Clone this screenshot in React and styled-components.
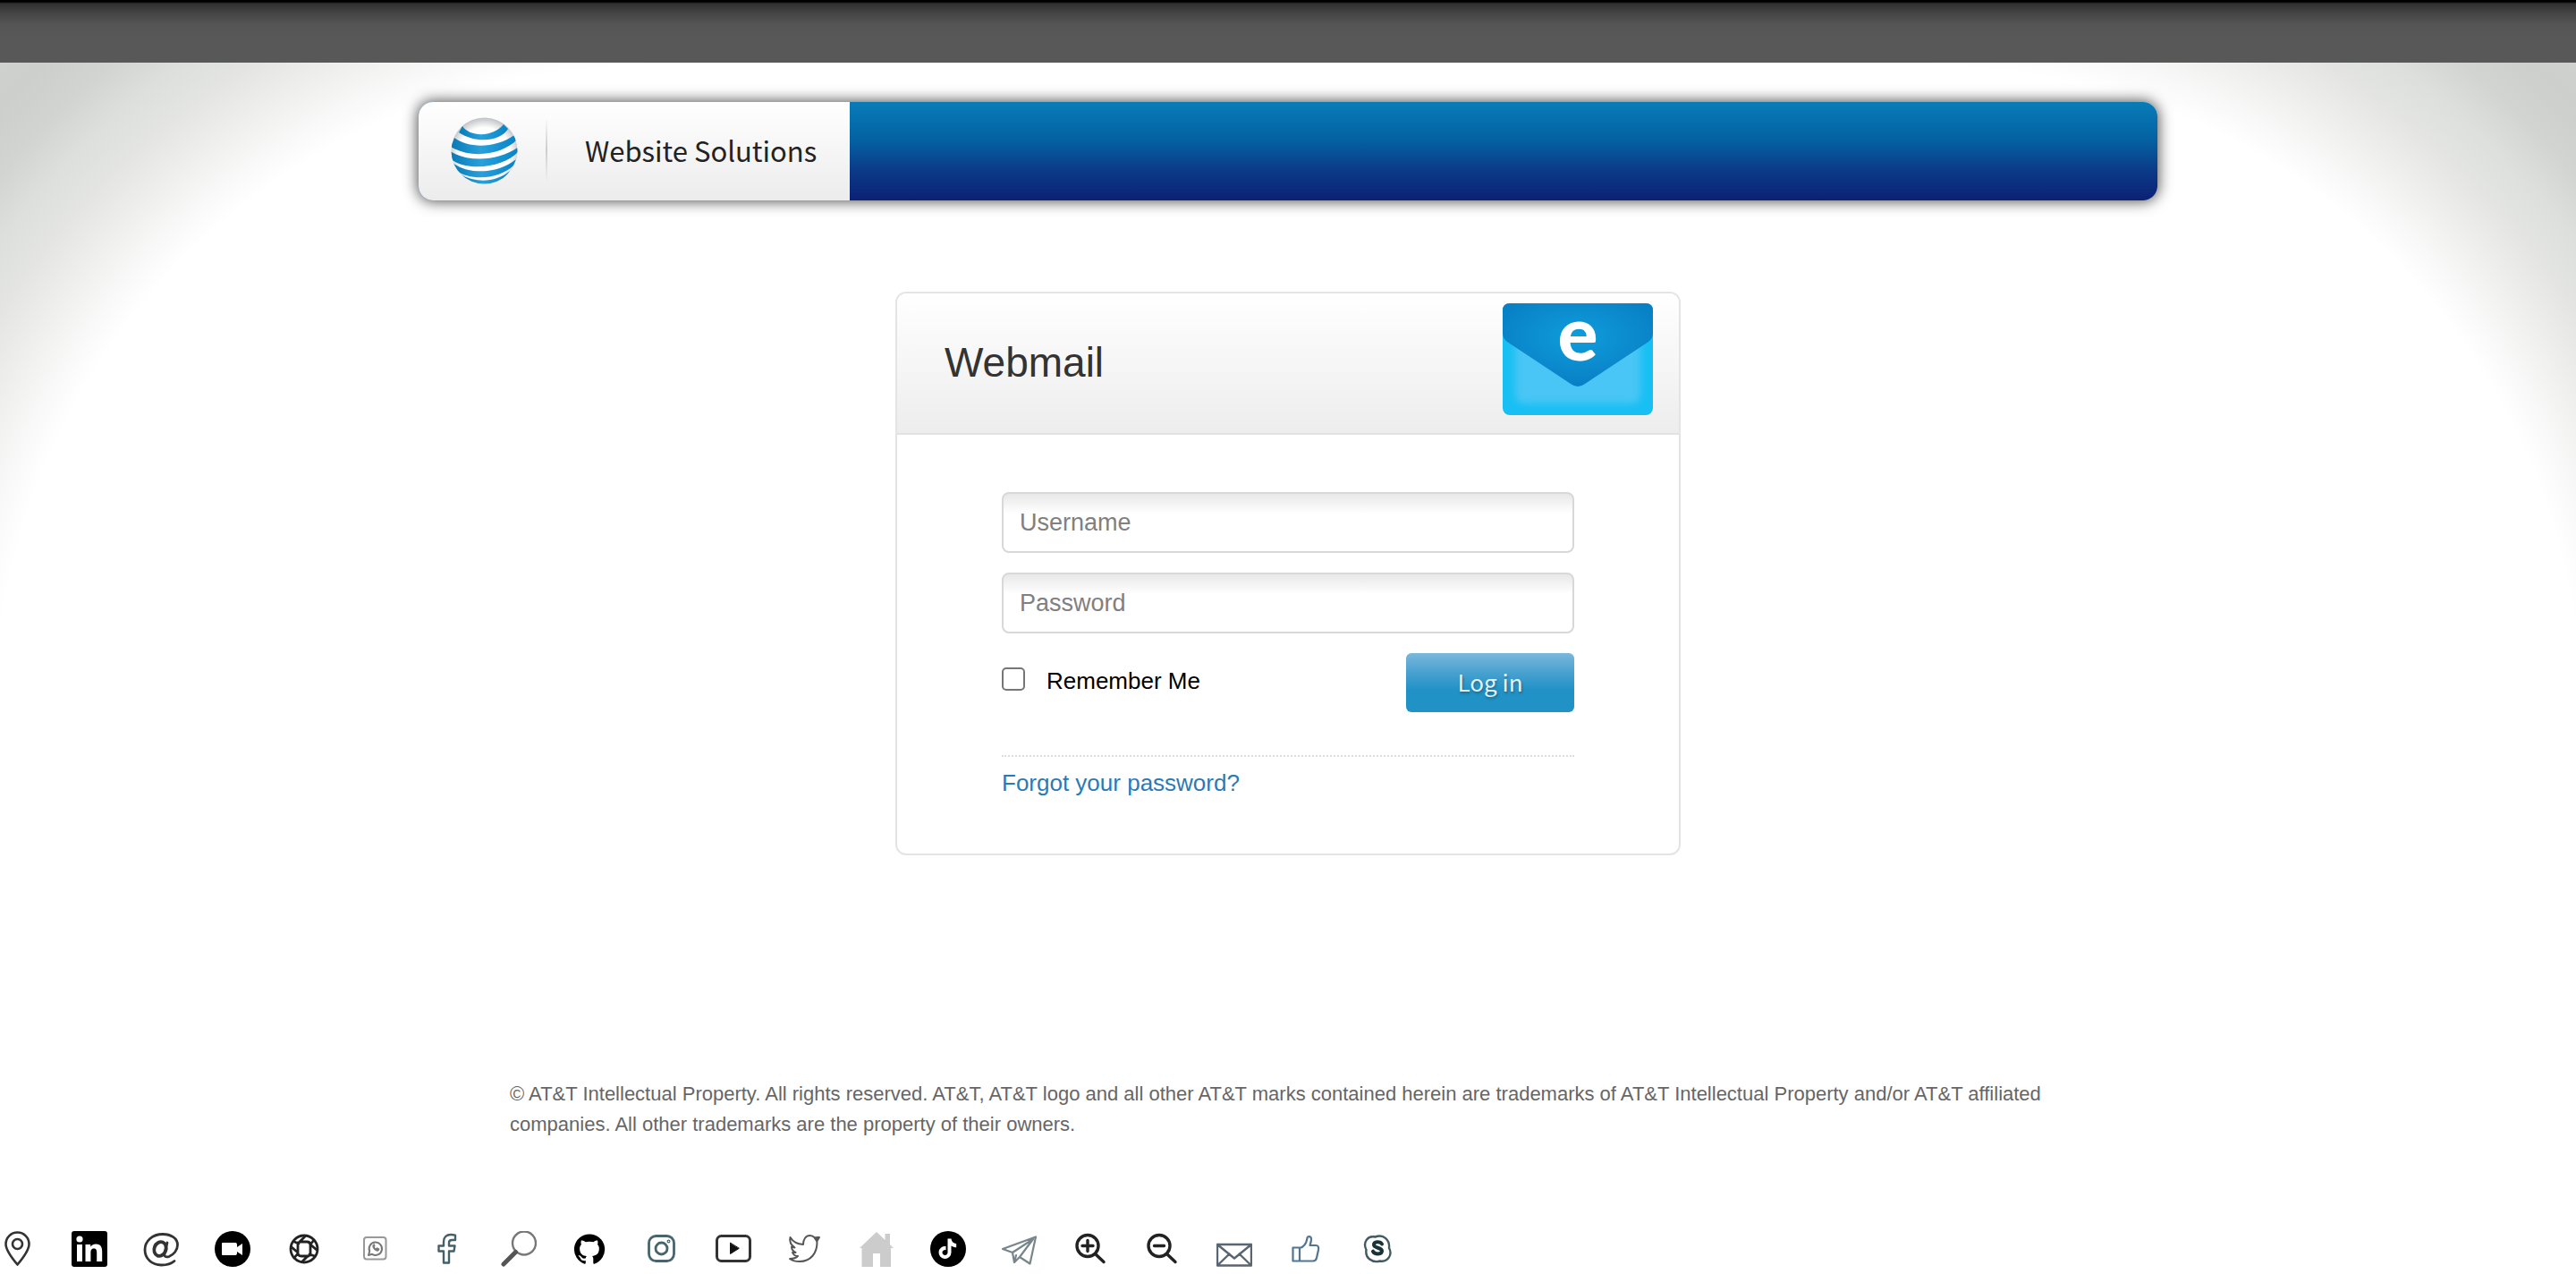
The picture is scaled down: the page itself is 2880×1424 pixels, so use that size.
import React from "react";
import styled, { createGlobalStyle } from "styled-components";

const Global = createGlobalStyle`
  *, *::before, *::after { box-sizing: border-box; }
  body {
    margin: 0;
    background: #fff;
    color: #000;
    font-family: "Liberation Sans", Arial, sans-serif;
    font-size: 26px;
    line-height: 34px;
  }
`;

const fade = "#fff 725px, #f8f8f8 760px, #efefed 800px, #e4e5e3 850px, #dcdfdc 895px, #d1d4d1 940px, #cccfcc 990px, #d0d2cf 1030px";

const Page = styled.div`
  background:
    radial-gradient(circle at 100% 100%, ${fade}) 0 70px / 720px 730px no-repeat,
    radial-gradient(circle at 0 100%, ${fade}) 100% 70px / 720px 730px no-repeat;
`;

const TopBar = styled.div`
  height: 70px;
  background: linear-gradient(#000 2px, #303030 4px, #444 14px, #555 28px, #585858 44px);
`;

const Header = styled.header`
  display: flex;
  width: calc(100% - 80px);
  max-width: 1944px;
  height: 110px;
  margin: 44px auto 0;
  border-radius: 16px;
  overflow: hidden;
  background: linear-gradient(#087cb8, #0462a2 38%, #0b3a88 70%, #0c2174);
  box-shadow: 0 0 16px 1px rgba(0, 0, 0, 0.7);
`;

const Brand = styled.div`
  display: flex;
  align-items: center;
  width: 482px;
  padding: 0 0 2px 36px;
  background: linear-gradient(#fff, #ececec);
`;

const BrandRule = styled.span`
  width: 2px;
  height: 72px;
  margin: 0 42px 0 31px;
  background: linear-gradient(transparent, #ccc 50%, transparent);
`;

const BrandName = styled.span`
  color: #222;
  font-family: "Noto Sans CJK SC", "Noto Sans", sans-serif;
  font-size: 31px;
  line-height: 40px;
  white-space: nowrap;
`;

const Card = styled.main`
  width: calc(100% - 80px);
  max-width: 878px;
  margin: 102px auto 0;
  border: 2px solid #e4e4e4;
  border-radius: 12px;
  background: #fff;
`;

const CardHead = styled.div`
  display: flex;
  align-items: flex-start;
  justify-content: space-between;
  height: 158px;
  padding: 11px 29px 0 53px;
  border-bottom: 2px solid #e2e2e2;
  border-radius: 10px 10px 0 0;
  background: linear-gradient(#fff, #ededed);
`;

const Title = styled.h1`
  margin: 39px 0 0;
  color: #333;
  font-size: 46px;
  font-weight: 400;
  line-height: 54px;
`;

const Form = styled.form`
  display: flex;
  flex-direction: column;
  gap: 22px;
  padding: 64px 117px 62px;
`;

const Field = styled.input`
  width: 100%;
  height: 68px;
  padding: 0 18px;
  border: 2px solid #d8d8d8;
  border-radius: 8px;
  background: linear-gradient(#e8e8e8, #fff 22px);
  color: #333;
  font-family: inherit;
  font-size: 27px;
  outline: none;
  &::placeholder { color: #808080; opacity: 1; }
`;

const Actions = styled.div`
  display: flex;
  align-items: flex-start;
  justify-content: space-between;
`;

const Remember = styled.label`
  display: flex;
  align-items: center;
  gap: 24px;
  margin-top: 14px;
`;

const Check = styled.input`
  appearance: none;
  width: 26px;
  height: 26px;
  margin: 0 0 4px;
  border: 2px solid #767676;
  border-radius: 5px;
  background: #fff;
  &:checked { background: #2192c6; }
`;

const Submit = styled.button`
  width: 188px;
  height: 66px;
  padding: 0 0 4px;
  border: 0;
  border-radius: 6px;
  background: linear-gradient(#7bb8dc, #4fa4d1 28%, #2192c6 62%, #2192c6);
  color: #e6f1f8;
  font-family: "Noto Sans CJK SC", "Noto Sans", sans-serif;
  font-size: 26px;
  font-weight: 400;
  text-shadow: 1px 2px 3px rgba(0, 0, 0, 0.3);
`;

const Recover = styled.div`
  margin-top: 26px;
  padding-top: 12px;
  border-top: 2px dotted #ddd;
`;

const RecoverLink = styled.a`
  color: #2a7ab5;
  text-decoration: none;
`;

const Legal = styled.footer`
  width: calc(100% - 80px);
  max-width: 1740px;
  margin: 250px auto 0;
  color: #666;
  font-size: 22px;
  line-height: 34px;
`;

const IconStrip = styled.nav`
  display: flex;
  flex-wrap: wrap;
  gap: 40px;
  padding: 102px 0 8px;
`;

const Glyph = styled.svg`
  display: block;
  width: 40px;
  height: 40px;
  fill: none;
  stroke: ${(p) => p.$tone || "#333"};
  stroke-width: ${(p) => p.$weight || 2};
  stroke-linejoin: round;
  stroke-linecap: round;
`;

const EnvelopeArt = styled.svg`
  display: block;
  flex: none;
  overflow: visible;
`;

const Globe = () => (
  <svg width="75" height="75" viewBox="0 0 75 75" role="img" aria-label="AT&T">
    <defs>
      <radialGradient id="ball" cx="50%" cy="54%" r="54%">
        <stop offset="0.72" stopColor="#fff" />
        <stop offset="1" stopColor="#bfc2c6" />
      </radialGradient>
      <linearGradient id="band" x1="0" x2="1">
        <stop offset="0" stopColor="#0879b5" />
        <stop offset="0.45" stopColor="#28a0dc" />
        <stop offset="1" stopColor="#0784c6" />
      </linearGradient>
      <clipPath id="disc"><circle cx="37.5" cy="37.5" r="37" /></clipPath>
    </defs>
    <circle cx="37.5" cy="37.5" r="37" fill="url(#ball)" />
    <g clipPath="url(#disc)" fill="url(#band)">
      <path d="M13 10 C22 23 48 22 59 8 L64 13 C56 27 28 30 9 17Z" />
      <path d="M4 23 C20 35 50 35 71 20 L74 25 C58 42 22 47 0 33Z" />
      <path d="M-1 38 C20 51 54 49 76 33 L75 39 C60 55 22 62 0 47Z" />
      <path d="M2 51 C20 65 54 63 73 47 L70 54 C56 68 24 73 5 59Z" />
      <path d="M11 64 C28 74 51 73 66 60 C60 69 50 76 38 77 C27 77 17 71 11 64Z" />
    </g>
  </svg>
);

const Envelope = () => (
  <EnvelopeArt width="168" height="125" viewBox="0 0 168 125" role="img" aria-label="Webmail">
    <defs>
      <radialGradient id="flap" cx="50%" cy="40%" r="60%">
        <stop offset="0" stopColor="#0f9ddb" />
        <stop offset="1" stopColor="#087fc4" />
      </radialGradient>
      <filter id="soft" x="-20%" y="-20%" width="140%" height="140%"><feGaussianBlur stdDeviation="4" /></filter>
    </defs>
    <rect width="168" height="125" rx="8" fill="#18bff3" />
    <rect x="14" y="20" width="140" height="92" rx="10" fill="#49c6f5" filter="url(#soft)" />
    <path d="M8 0H160Q168 0 168 8V34Q168 39 163 43L92 90Q84 96 76 90L5 43Q0 39 0 34V8Q0 0 8 0Z" fill="url(#flap)" />
    <text x="84" y="64" textAnchor="middle" fill="#fff" fontFamily="Lato, sans-serif" fontWeight="900" fontSize="84">e</text>
  </EnvelopeArt>
);

const icons = [
  { name: "Location", weight: 2.6, art: <><path d="M19.500 37.500C14 31 6.500 22 6.500 14.500a13 13 0 0 1 26 0C32.500 22 25 31 19.500 37.500Z" /><circle cx="19.500" cy="14.500" r="5.500" /></> },
  { name: "LinkedIn", art: <g stroke="none"><rect width="40" height="40" rx="3" fill="#000" /><g fill="#fff"><circle cx="9" cy="9" r="3.600" /><path d="M6 15h6v19H6zM15.500 15h5.700v2.600c1-1.700 3-3.100 6-3.100 6 0 7 4 7 9V34h-6v-9.400c0-2.300 0-5-3.200-5s-3.600 2.500-3.600 5V34h-5.900z" /></g></g> },
  { name: "Email", weight: 2.8, art: <><ellipse cx="19" cy="20" rx="6.500" ry="8" transform="rotate(22 19 20)" strokeWidth="3.800" /><path d="M27 13l-3 12c-.8 4 2 4.500 5 3.500 5-2 9.500-7 9.500-13C38.500 8 31 3.500 22 3.500 10.500 3.500 2 11 2 21c0 10 8 17 18.500 17 6 0 11-1.500 14.500-4.500" /></> },
  { name: "Video", art: <g stroke="none"><circle cx="20" cy="20" r="20" fill="#000" /><path d="M9 13h14q2 0 2 2v3l6-4v13l-6-4v2q0 2-2 2H9q-1 0-1-1V14q0-1 1-1Z" fill="#fff" /></g> },
  { name: "Network", tone: "#222", weight: 2.8, art: <><circle cx="20" cy="20" r="15" /><path d="M15 12h8q4 0 4 4v11M25 28h-8q-4 0-4-4V13M15 12l6-6M27 15l7 6M24 28l-6 6M13 24l-7-6M9 12l5 2M31 10l-4 5M32 28l-6-2M9 30l4-5" /></> },
  { name: "WhatsApp", tone: "#777", weight: 2, art: <><rect x="7" y="7" width="24.500" height="24.500" rx="3" stroke="#999" /><path d="M12 27l1.200-4.500a7.200 7.200 0 1 1 2.800 3.300Z" /><path d="M17 16c-1 3 3 7 6 6l1-2-2.500-1.200-1.200 1c-1-.4-1.600-1-2-2l.8-1-.8-2Z" fill="#777" strokeWidth="1" /></> },
  { name: "Facebook", tone: "#43616b", weight: 2.4, art: <path d="M16 35.500V22.500h-5.500v-6H16V12c0-5.500 3.500-8 8-8 2 0 3.500.2 5 .6V10h-3.500c-2.500 0-3.500 1-3.500 3v3.500h6.500l-1 6H22v13Z" /> },
  { name: "Search", tone: "#777", weight: 2.4, art: <><circle cx="26" cy="13.500" r="13" /><path d="M16.500 23.500L3 37" stroke="#555" strokeWidth="5" /></> },
  { name: "GitHub", art: <path stroke="none" fill="#000" transform="translate(2 3) scale(1.420)" d="M12 .3a12 12 0 0 0-3.800 23.400c.6.1.8-.3.8-.6v-2c-3.300.7-4-1.600-4-1.600-.6-1.400-1.400-1.800-1.400-1.800-1-.7.1-.7.1-.7 1.200 0 1.900 1.200 1.900 1.200 1 1.800 2.800 1.300 3.500 1 0-.8.4-1.300.7-1.600-2.700-.3-5.500-1.300-5.500-6 0-1.200.5-2.300 1.300-3.100-.2-.4-.6-1.600 0-3.200 0 0 1-.3 3.400 1.200a11.500 11.500 0 0 1 6 0c2.300-1.500 3.300-1.200 3.300-1.200.6 1.600.2 2.800 0 3.200.9.800 1.300 1.900 1.300 3.200 0 4.600-2.800 5.600-5.500 5.900.5.400.9 1 .9 2.200v3.300c0 .3.1.7.8.6A12 12 0 0 0 12 .3" /> },
  { name: "Instagram", tone: "#49646b", weight: 2.8, art: <><rect x="5.500" y="5.500" width="28" height="28" rx="8" /><circle cx="19.500" cy="19.500" r="6.500" /><circle cx="27.500" cy="11.500" r=".6" /></> },
  { name: "YouTube", weight: 3, art: <><rect x="1.500" y="5.500" width="37" height="28" rx="5" /><path d="M16.500 13.500v12L26 19.500Z" fill="#111" stroke="#111" strokeWidth="1" /></> },
  { name: "Twitter", tone: "#555", weight: 2, art: <><path d="M3.500 7c3 5 7 7.500 14.500 8 0-6 3-10 7.500-10 2.500 0 4 1 5.500 2.500L36 7l-2.500 4C34 25 26 34 14 34c-5 0-8-1-11-3 4 0 7-1 9-3-3 0-5-1.500-6-4h3.500c-3-1.500-4.500-3.500-4.500-6.500l3.500 1C3.500 15 2.500 11 3.500 7Z" /><path d="M31 8l4-1-2 4Z" fill="#333" /></> },
  { name: "Home", art: <path stroke="none" fill="#ccc" d="M1 19L20 1l9.500 9V3H35v12l4 4h-3v21H24V25h-8v15H3.500V19Z" /> },
  { name: "TikTok", art: <g stroke="none"><circle cx="20" cy="20" r="20" fill="#000" /><path d="M19.500 8.500h4c.3 3.200 2.500 5.300 5.700 5.700v4c-2 0-4-.6-5.700-1.800V24a7 7 0 1 1-6-7v4.200a3 3 0 1 0 2 2.800Z" fill="#fff" /></g> },
  { name: "Telegram", tone: "#78868b", weight: 2.2, art: <path d="M1 20L38 6.500l-6.500 30L20 29l-6 6-2-11ZM12 24l23-15-15 20M14 35l2-8" /> },
  { name: "Zoom in", tone: "#222", weight: 3.400, art: <><circle cx="16" cy="16.500" r="12" /><path d="M25 26l9 8.500M10 16.500h12M16 10.500v12" /></> },
  { name: "Zoom out", tone: "#222", weight: 3.400, art: <><circle cx="16" cy="16.500" r="12" /><path d="M25 26l9 8.500M10.500 16.500h11" /></> },
  { name: "Mail", tone: "#596572", weight: 2.4, art: <path d="M1 15h38v23.500H1ZM1 15l19 15.500L39 15M1 38.500l13.500-13M39 38.500l-13.500-13" /> },
  { name: "Like", tone: "#517694", weight: 2.2, art: <path d="M5.500 18.500h7.500v15H5.500ZM13 19c4-1 7.500-5 8.500-11 .3-3 4.500-2.500 4.500 1 0 3-1 5-1.500 7H31c3 0 3.500 2 3 5l-2 9c-.6 2.500-2 3.500-4 3.500H13" /> },
  { name: "Skype", tone: "#425a61", weight: 2.4, art: <><path d="M7.500 21c-4-8 1-16 10-14.500C27 3 34 10 33 19c4 7-1 16-10 14.500C14 36 6 30 7.500 21Z" /><path d="M25 14.500c-2-3-9-3-9 .8 0 4.200 9 2.700 9 7 0 4-8 4.200-10 .4" stroke="#173238" strokeWidth="4" /></> },
];

export default function App() {
  return (
    <Page>
      <Global />
      <TopBar />
      <Header>
        <Brand>
          <Globe />
          <BrandRule />
          <BrandName>Website Solutions</BrandName>
        </Brand>
      </Header>
      <Card>
        <CardHead>
          <Title>Webmail</Title>
          <Envelope />
        </CardHead>
        <Form onSubmit={(e) => e.preventDefault()}>
          <Field type="text" placeholder="Username" aria-label="Username" />
          <Field type="password" placeholder="Password" aria-label="Password" />
          <Actions>
            <Remember htmlFor="remember">
              <Check id="remember" type="checkbox" />
              Remember Me
            </Remember>
            <Submit type="submit">Log in</Submit>
          </Actions>
          <Recover>
            <RecoverLink href="#recover">Forgot your password?</RecoverLink>
          </Recover>
        </Form>
      </Card>
      <Legal>
        © AT&amp;T Intellectual Property. All rights reserved. AT&amp;T, AT&amp;T logo and all other AT&amp;T marks contained herein are trademarks of AT&amp;T Intellectual Property and/or AT&amp;T affiliated companies. All other trademarks are the property of their owners.
      </Legal>
      <IconStrip aria-label="Links">
        {icons.map((icon) => (
          <Glyph key={icon.name} viewBox="0 0 40 40" role="img" aria-label={icon.name} $tone={icon.tone} $weight={icon.weight}>
            {icon.art}
          </Glyph>
        ))}
      </IconStrip>
    </Page>
  );
}
